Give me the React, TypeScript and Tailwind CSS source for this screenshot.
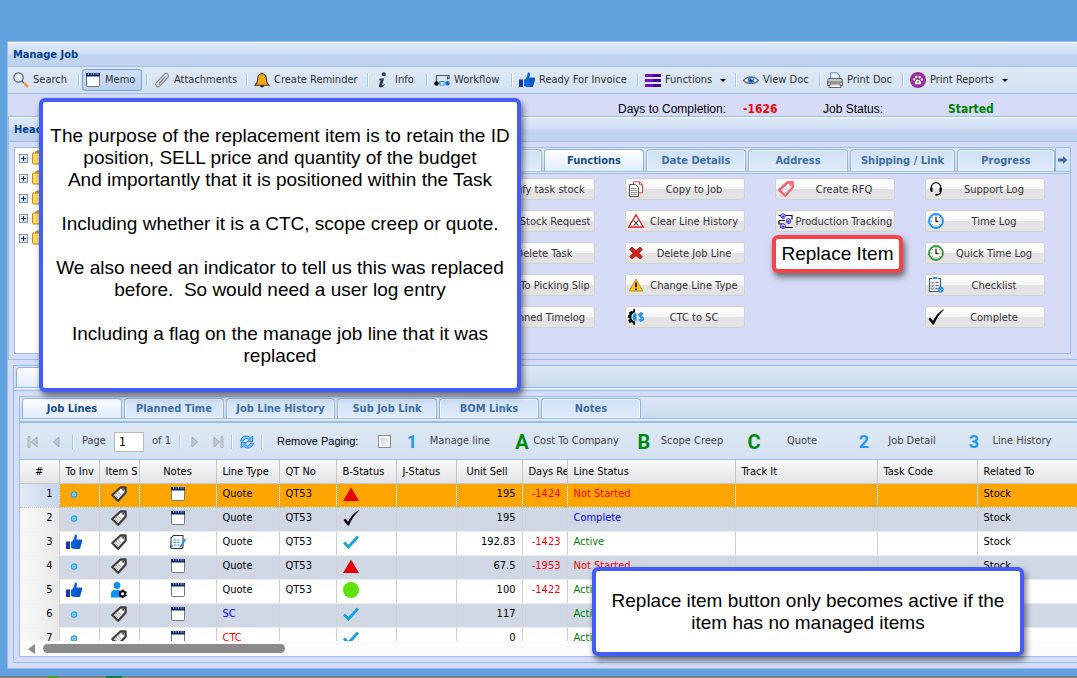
import type { ReactNode } from "react";
import clsx from "clsx";

const UI_FONT = "font-['DejaVu_Sans_Condensed','Noto_Sans',sans-serif]";
const NOTE_FONT = "font-['Liberation_Sans',Arial,sans-serif]";

function Svg({ children, className = "size-4" }: { children: ReactNode; className?: string }) {
  return (
    <svg viewBox="0 0 16 16" className={clsx("shrink-0", className)} fill="none" aria-hidden="true">
      {children}
    </svg>
  );
}

/* ---------- toolbar icons ---------- */

const SearchIcon = () => (
  <Svg>
    <circle cx="5.5" cy="5.5" r="4.6" fill="#e3ecf8" stroke="#59617c" strokeWidth="1.3" />
    <path d="M9 9l2 2" stroke="#59617c" strokeWidth="1.5" />
    <path d="M11 11l4 4" stroke="#e2a04c" strokeWidth="2.6" />
  </Svg>
);

const MemoIcon = () => (
  <Svg>
    <rect x="1.5" y="1.5" width="13" height="13" rx="1" fill="#fff" stroke="#77777c" />
    <path d="M1 1h14v3.500H1z" fill="#0e2a66" />
    <path d="M3.500 0v3M6 0v3M8.500 0v3M11 0v3M13 0v3" stroke="#9fb4dc" strokeWidth=".8" />
  </Svg>
);

const ClipIcon = () => (
  <Svg>
    <path
      d="M11.500 4.500l-6 6.500c-1 1.200.7 2.500 1.700 1.500l6.500-7c2-2.400-1-5.400-3.300-3.200l-7.800 8c-2.400 2.700.8 6 3.400 3.600l6-6.300"
      stroke="#8b8d90"
      strokeWidth="1.200"
    />
  </Svg>
);

const BellIcon = () => (
  <Svg>
    <path d="M8 .8v2" stroke="#222" strokeWidth="2.200" />
    <path d="M8 1.800c-3 0-4.300 2.400-4.300 5.200 0 3-.8 4.700-2.500 6.200h13.600c-1.700-1.500-2.500-3.200-2.500-6.200 0-2.800-1.300-5.200-4.300-5.200z" fill="#fca714" stroke="#493a31" strokeWidth="1.100" />
    <path d="M6 13.500h4c0 2.600-4 2.600-4 0z" fill="#222" />
  </Svg>
);

const InfoIcon = () => (
  <Svg>
    <circle cx="8.800" cy="2.300" r="2" fill="#2f3e4d" />
    <path d="M4.500 6.600h4.600l-2 6.800c.8 0 1.500-.5 2.200-1.300l.4.400c-1.400 2-2.700 3-4.300 3-1.200 0-1.700-.9-1.300-2.200l1.500-5c-.5 0-.9.200-1.500.3z" fill="#2f3e4d" />
  </Svg>
);

const WorkflowIcon = () => (
  <Svg>
    <path d="M2.500 11V3.500h12.500v3h-1.500M4 11h3" stroke="#52565e" strokeWidth="1.200" />
    <path d="M13.500 4.500v3" stroke="#52565e" />
    <circle cx="2.500" cy="11.500" r="2.200" fill="#000" />
    <rect x="6" y="9.500" width="4" height="3.600" fill="#fff" stroke="#1e90ff" />
    <circle cx="13.500" cy="11.300" r="2.200" fill="#1668e8" />
  </Svg>
);

const ThumbIcon = () => (
  <Svg>
    <path d="M0 7.500h4v7.500H0z" fill="#153c9d" />
    <path d="M5 8c2-1 3.300-3 3.600-6.400C8.800 0 11 .2 11 2.300c0 1.500-.4 2.500-.7 3.500H15c1 0 1.200 1.200.8 2.200l-1.500 5.500c-.3 1-.8 1.500-1.800 1.500H7.500L5 14z" fill="#0b66dd" />
    <path d="M10.300 5.800H15c1 0 1.200 1.200.8 2.200L14 14c-.3.800-.8 1-1.500 1h-2z" fill="#0a56c4" />
  </Svg>
);

const BarsIcon = () => (
  <Svg>
    <path d="M0 3.500h16M0 8.500h16M0 13.500h16" stroke="#7310c4" strokeWidth="3" />
    <path d="M8 3.500h8M8 8.500h8M8 13.500h8" stroke="#4b0290" strokeWidth="3" />
  </Svg>
);

const EyeIcon = () => (
  <Svg>
    <path d="M.5 8.500c4-4.800 11-4.800 15 0-4 4-11 4-15 0z" fill="#f5f8fc" stroke="#646b75" strokeWidth="1.200" />
    <circle cx="8" cy="8" r="3.200" fill="#2483e2" />
    <circle cx="8" cy="8.300" r="1.400" fill="#062f63" />
    <circle cx="9" cy="6.800" r=".9" fill="#fff" />
  </Svg>
);

const PrinterIcon = () => (
  <Svg>
    <path d="M3.500 8V.8h6.500l2.500 2.400V8z" fill="#e8f3fd" stroke="#4c8fd6" />
    <path d="M1.500 6.500h13l1 2v5H.5v-5z" fill="#c9c9c9" stroke="#666" />
    <path d="M1 10h14" stroke="#5a5a5a" />
    <path d="M3 12h10l1 3.500H2z" fill="#eee" stroke="#666" />
  </Svg>
);

const PawIcon = () => (
  <Svg>
    <circle cx="8" cy="8" r="8" fill="#97309b" />
    <ellipse cx="6.300" cy="5" rx="1.100" ry="1.600" fill="#fff" />
    <ellipse cx="9.700" cy="5" rx="1.100" ry="1.600" fill="#fff" />
    <ellipse cx="4.200" cy="7.500" rx="1" ry="1.300" fill="#fff" />
    <ellipse cx="11.800" cy="7.500" rx="1" ry="1.300" fill="#fff" />
    <path d="M8 7.700c1.800 0 3.200 2 3.200 3.500 0 1.300-1.600 1.400-3.200.7-1.600.7-3.200.6-3.200-.7 0-1.500 1.400-3.500 3.200-3.500z" fill="#fff" />
    <path d="M8 9v2M7 10h2" stroke="#97309b" strokeWidth=".8" />
  </Svg>
);

/* ---------- function button icons ---------- */

const CopyIcon = () => (
  <Svg>
    <path d="M5.500.8h6l3 3v8h-9z" fill="#fff" stroke="#e33c48" />
    <path d="M11.500.8v3h3" stroke="#e33c48" />
    <path d="M1.500 3.500h6l3 3v9h-9z" fill="#fff" stroke="#555" />
    <path d="M3 7.500h5M3 9.500h6M3 11.500h6M3 13.500h6" stroke="#777" strokeWidth=".8" />
  </Svg>
);

const ClearIcon = () => (
  <Svg>
    <path d="M8 1.800L15.200 14H.8z" fill="#fff" stroke="#ee1c24" strokeWidth="1.300" />
    <path d="M5.800 7.500l4.500 5M10.300 7.500l-4.500 5" stroke="#222" strokeWidth="1.100" />
  </Svg>
);

const CrossIcon = () => (
  <Svg>
    <path d="M4 2l4 3.500L12 2l2.300 2.300L11 8.200l3.300 3.500L12 14l-4-3.300L4 14l-2.300-2.300L5 8.200 1.700 4.300z" fill="#d32222" stroke="#9e1414" strokeWidth=".8" />
  </Svg>
);

const WarnIcon = () => (
  <Svg>
    <path d="M8 2l6.800 12H1.200z" fill="#fdc91b" stroke="#c18d10" strokeLinejoin="round" />
    <path d="M8 5.500v4.800M8 11.500v1.700" stroke="#111" strokeWidth="1.800" />
  </Svg>
);

const CogMoneyIcon = () => (
  <Svg>
    <path d="M7 0v3.200a5 5 0 0 0 0 9.600V16H5.500L5 14l-1.500-.8-2 .8-1.200-2.500L1.500 10v-1L0 8.500v-2L1.500 5.500 1 3.500 3.500 2l1.500.6L5.500 0z" fill="#050505" />
    <path d="M8.500 4a4 4 0 0 0 0 8z" fill="#1e8ee9" />
    <path d="M15.300 5.200c-1.500-1.200-4.600-.9-4.600.9 0 2.300 4.800 1 4.800 3.500 0 2-3.500 2.300-5 .8M13 3v10" stroke="#1e8ee9" strokeWidth="1.400" />
  </Svg>
);

const RfqIcon = () => (
  <Svg>
    <path d="M9.500 1.500l5-.2.200 5.200-7.600 8.200L1.200 9z" fill="#fff" stroke="#f4606c" strokeWidth="2.400" strokeLinejoin="round" />
    <path d="M4.500 8.500l3.500 3.500M6 7l3.500 3.500M7.500 5.500L11 9" stroke="#a9a9ad" strokeDasharray="1 .8" />
    <circle cx="12.300" cy="3.700" r="1" fill="#f4606c" />
  </Svg>
);

const TrackingIcon = () => (
  <Svg>
    <path d="M.5 2.500H14v4M2 14.500h12.500M1 7.500v3.500h3M1 7.500h6" stroke="#111" strokeWidth="1.200" />
    <g fill="#e5e2fc" stroke="#3a22d8">
      <circle cx="5" cy="3" r="2.300" />
      <circle cx="10.500" cy="8" r="2.300" />
      <circle cx="5" cy="13" r="2.300" />
    </g>
    <path d="M5 2v4M3.800 3.500h2.400M10.500 7v4M9.300 8.500h2.400M5 12v4M3.800 13.500h2.400" stroke="#3a22d8" strokeWidth=".8" />
  </Svg>
);

const HeadsetIcon = () => (
  <Svg>
    <path d="M3.200 9V6.500a4.800 4.800 0 0 1 9.600 0v4c0 2-1 3-4 3.300" stroke="#111" strokeWidth="1.300" />
    <path d="M2 6.800h2.600V11H3.300C2.200 10.400 2 9 2 6.800zM14 6.800h-2.600V11h1.300c1.100-.6 1.300-2 1.300-4.200z" fill="#111" />
    <path d="M7.500 13.800h2" stroke="#111" strokeWidth="1.800" />
  </Svg>
);

function ClockIcon({ color }: { color: string }) {
  return (
    <Svg>
      <circle cx="8" cy="8" r="7" fill="#fff" stroke={color} strokeWidth="1.900" />
      <path d="M8 4v4.500h2.500" stroke="#222" strokeWidth="1.300" />
      <path d="M8 2.500v1M8 12.500v1M2.500 8h1M12.500 8h1M4.300 4.300l.5.500M11.200 4.800l.5-.5M4.300 11.700l.5-.5M11.200 11.200l.5.500" stroke="#333" />
    </Svg>
  );
}

const ChecklistIcon = () => (
  <Svg>
    <path d="M4 1.500H1.500v13h9M10 1.500h2.500V10" stroke="#55606e" strokeWidth="1.200" />
    <path d="M4.500 1h5" stroke="#1e90ff" strokeWidth="2" />
    <path d="M3.200 5.500l1 1 1.500-1.800M3.200 8.500l1 1 1.500-1.800M3.200 11.500l1 1 1.500-1.800M7.500 5.500h3M7.500 8.500h3M7.500 11.500h2" stroke="#55606e" />
    <circle cx="12.800" cy="12.600" r="2.900" fill="#1e90ff" />
    <path d="M11.500 12.600l1 1 1.700-1.700" stroke="#fff" strokeWidth=".9" />
  </Svg>
);

const TickIcon = () => (
  <Svg>
    <path d="M.5 10l2-1.400L5 12C7.500 7 10.500 3 15.800.3l.2.500C11.500 4.800 8.500 9.500 6 15.500H4.500z" fill="#000" />
  </Svg>
);

/* ---------- grid icons ---------- */

const DotIcon = () => (
  <Svg>
    <circle cx="8" cy="8.500" r="2.700" fill="#9ad7f5" stroke="#2a9fe0" strokeWidth="1.200" />
    <circle cx="8" cy="8.500" r="1" fill="#5cb0dd" />
  </Svg>
);

const TagIcon = () => (
  <Svg>
    <path d="M9.500 1.500l5-.2.200 5.200-7.600 8.200L1.300 9z" fill="#fff" stroke="#3d3d3f" strokeWidth="2.300" strokeLinejoin="round" />
    <path d="M3.800 8.700l3.500 3.500M5.300 7.200l3.700 3.700M6.900 5.700l3.600 3.600" stroke="#8e8e90" strokeWidth="1.100" strokeDasharray="1 .6" />
    <circle cx="12.200" cy="3.800" r="1" fill="#3d3d3f" />
  </Svg>
);

const NoteEditIcon = () => (
  <Svg>
    <path d="M3.500 1.500h9.500v11c0 1.500-.8 2-2 2H2c-1 0-1.500-.8-1.500-2.500H3M3.500 1.500L1 4v8" fill="#fff" stroke="#333" strokeWidth="1.100" />
    <path d="M3.500 6h6M3.500 8.500h6M3.500 11h6" stroke="#1e90ff" strokeDasharray="3 1" />
    <path d="M15.500 5L11 12" stroke="#1e90ff" strokeWidth="1.700" />
    <path d="M11 11.500l-.5 1.800" stroke="#222" />
  </Svg>
);

const UserCogIcon = () => (
  <Svg>
    <circle cx="6" cy="3.500" r="3.400" fill="#0d93f7" />
    <path d="M0 15.500v-4C0 9.300 1.500 8 3.500 8h4c2 0 2.500 1 2.500 2v5.500z" fill="#0d93f7" />
    <circle cx="11.700" cy="11.800" r="2.600" fill="#fff" stroke="#111" strokeWidth="2" />
    <path d="M11.700 7.600v1.700M11.700 14.300V16M8 9.800l1.500.8M14 13l1.500.8M8 13.800l1.500-.8M14 10.600l1.500-.8" stroke="#111" strokeWidth="1.700" />
  </Svg>
);

const TriangleIcon = () => (
  <Svg>
    <path d="M8 1.500l8 13.500H0z" fill="#e60000" />
  </Svg>
);

const BlueTickIcon = () => (
  <Svg>
    <path d="M1 8.500l4.500 4.500L15 2.500" stroke="#12a1e2" strokeWidth="2.900" />
  </Svg>
);

const CircleIcon = () => (
  <Svg>
    <circle cx="8" cy="8" r="8" fill="#5ee20c" />
  </Svg>
);

const RefreshIcon = () => (
  <Svg>
    <path d="M1.500 7C2 3.500 5 1.500 8.500 2.200c1.200.2 2.300.9 3 1.800L13.800 2v5.500H8.300l2-2C8 3.800 4.800 4.500 4.300 7z" fill="#7cc2f5" stroke="#1474d4" strokeWidth=".8" />
    <path d="M14.500 9c-.5 3.500-3.500 5.500-7 4.800-1.200-.2-2.300-.9-3-1.800L2.200 14V8.500h5.500l-2 2c2.300 1.700 5.500 1 6-1.500z" fill="#7cc2f5" stroke="#1474d4" strokeWidth=".8" />
  </Svg>
);

const FolderIcon = () => (
  <Svg>
    <path d="M3 2.500L5 1h9v11l-2 2.500" fill="#e8a82c" stroke="#b57a14" />
    <rect x=".5" y="3" width="12" height="11" rx="1" fill="#fbdc70" stroke="#c18a1c" />
  </Svg>
);

function PagerArrow({ flip, bar }: { flip?: boolean; bar?: boolean }) {
  return (
    <Svg className={clsx("size-4", flip && "rotate-180")}>
      <path d="M11 3L5.500 8l5.500 5z" fill="#c6cad0" stroke="#a3a8b0" />
      {bar && <path d="M2 2.500h2v11H2z" fill="#d5d8dc" stroke="#a3a8b0" strokeWidth=".8" />}
    </Svg>
  );
}

/* ---------- shared pieces ---------- */

const Separator = () => <span className="h-3.5 w-0.5 shrink-0 border-l border-[#98c8ff] bg-white" />;

function PanelTitle({ children }: { children: ReactNode }) {
  return (
    <h2 className="flex h-6 items-center border-t border-white bg-linear-to-b from-[#dce8f7] from-0% via-[#cfdff3] via-48% to-[#c0d4ef] to-52% px-[5px] pt-0.5 text-[11px] font-bold text-[#04408c]">
      {children}
    </h2>
  );
}

function Tab({ label, width, active }: { label: string; width: string; active?: boolean }) {
  return (
    <button
      type="button"
      role="tab"
      aria-selected={!!active}
      className={clsx(
        "h-full shrink-0 rounded-t border border-b-0 border-[#8db2e3] pt-0.5 text-[11px] font-bold whitespace-nowrap",
        width,
        active
          ? "bg-linear-to-b from-white to-[#deecfd] text-[#15498b]"
          : "bg-linear-to-b from-[#cfe0f5] to-[#deebfc] text-[#416da3] inset-ring inset-ring-white/70",
      )}
    >
      {label}
    </button>
  );
}

/* ---------- data ---------- */

type ToolItem = { label: string; icon: ReactNode; width: string; pressed?: boolean; menu?: boolean };

const tools: ToolItem[] = [
  { label: "Search", icon: <SearchIcon />, width: "w-[65px]" },
  { label: "Memo", icon: <MemoIcon />, width: "w-[60px]", pressed: true },
  { label: "Attachments", icon: <ClipIcon />, width: "w-[90px]" },
  { label: "Create Reminder", icon: <BellIcon />, width: "w-[111px]" },
  { label: "Info", icon: <InfoIcon />, width: "w-[49px]" },
  { label: "Workflow", icon: <WorkflowIcon />, width: "w-[75px]" },
  { label: "Ready For Invoice", icon: <ThumbIcon />, width: "w-[116px]" },
  { label: "Functions", icon: <BarsIcon />, width: "w-[88px]", menu: true },
  { label: "View Doc", icon: <EyeIcon />, width: "w-[74px]" },
  { label: "Print Doc", icon: <PrinterIcon />, width: "w-[73px]" },
  { label: "Print Reports", icon: <PawIcon />, width: "w-[110px]", menu: true },
];

const functionColumns: { label: string; icon: ReactNode }[][] = [
  [
    { label: "Verify task stock", icon: <TickIcon /> },
    { label: "Add Stock Request", icon: <CopyIcon /> },
    { label: "Delete Task", icon: <CrossIcon /> },
    { label: "Add To Picking Slip", icon: <ChecklistIcon /> },
    { label: "Planned Timelog", icon: <ClockIcon color="#1e90ff" /> },
  ],
  [
    { label: "Copy to Job", icon: <CopyIcon /> },
    { label: "Clear Line History", icon: <ClearIcon /> },
    { label: "Delete Job Line", icon: <CrossIcon /> },
    { label: "Change Line Type", icon: <WarnIcon /> },
    { label: "CTC to SC", icon: <CogMoneyIcon /> },
  ],
  [
    { label: "Create RFQ", icon: <RfqIcon /> },
    { label: "Production Tracking", icon: <TrackingIcon /> },
  ],
  [
    { label: "Support Log", icon: <HeadsetIcon /> },
    { label: "Time Log", icon: <ClockIcon color="#1e90ff" /> },
    { label: "Quick Time Log", icon: <ClockIcon color="#3c9a40" /> },
    { label: "Checklist", icon: <ChecklistIcon /> },
    { label: "Complete", icon: <TickIcon /> },
  ],
];

const lineActions = [
  { mark: "1", label: "Manage line", width: "w-20" },
  { mark: "A", label: "Cost To Company", width: "w-[92px]" },
  { mark: "B", label: "Scope Creep", width: "w-20" },
  { mark: "C", label: "Quote", width: "w-20" },
  { mark: "2", label: "Job Detail", width: "w-20" },
  { mark: "3", label: "Line History", width: "w-20" },
];

const columns = [
  { title: "#", width: "w-[39px]", align: "text-center" },
  { title: "To Inv", width: "w-10", align: "pl-1.5 text-left" },
  { title: "Item S", width: "w-10", align: "pl-1.5 text-left" },
  { title: "Notes", width: "w-[77px]", align: "text-center" },
  { title: "Line Type", width: "w-[63px]", align: "pl-1.5 text-left" },
  { title: "QT No", width: "w-[57px]", align: "pl-1.5 text-left" },
  { title: "B-Status", width: "w-[60px]", align: "pl-1.5 text-left" },
  { title: "J-Status", width: "w-[60px]", align: "pl-1.5 text-left" },
  { title: "Unit Sell", width: "w-[66px]", align: "pr-1 text-center" },
  { title: "Days Re", width: "w-[45px]", align: "pl-1.5 text-left" },
  { title: "Line Status", width: "w-[168px]", align: "pl-1.5 text-left" },
  { title: "Track It", width: "w-[142px]", align: "pl-1.5 text-left" },
  { title: "Task Code", width: "w-[100px]", align: "pl-1.5 text-left" },
  { title: "Related To", width: "w-[140px]", align: "pl-1.5 text-left" },
];

type Line = {
  invoice?: boolean;
  user?: boolean;
  edited?: boolean;
  type: string;
  quote?: string;
  badge: "late" | "done" | "active" | "ok";
  sell: string;
  days?: string;
  status: string;
  related?: string;
};

const lines: Line[] = [
  { type: "Quote", quote: "QT53", badge: "late", sell: "195", days: "-1424", status: "Not Started", related: "Stock" },
  { type: "Quote", quote: "QT53", badge: "done", sell: "195", status: "Complete", related: "Stock" },
  { invoice: true, edited: true, type: "Quote", quote: "QT53", badge: "active", sell: "192.83", days: "-1423", status: "Active", related: "Stock" },
  { type: "Quote", quote: "QT53", badge: "late", sell: "67.5", days: "-1953", status: "Not Started", related: "Stock" },
  { invoice: true, user: true, type: "Quote", quote: "QT53", badge: "ok", sell: "100", days: "-1422", status: "Active" },
  { type: "SC", badge: "active", sell: "117", status: "Active" },
  { type: "CTC", badge: "active", sell: "0", status: "Active" },
];

const badges = {
  late: <TriangleIcon />,
  done: <TickIcon />,
  active: <BlueTickIcon />,
  ok: <CircleIcon />,
};

const typeColors: Record<string, string> = { SC: "text-[#0000ff]", CTC: "text-[#ff0000]" };
const statusColors: Record<string, string> = {
  "Not Started": "text-[#ff0000]",
  Complete: "text-[#0000ff]",
  Active: "text-[#008000]",
};

/* ---------- sections ---------- */

function Toolbar() {
  return (
    <div role="toolbar" className="flex h-7 items-center border-y border-[#99bce8] bg-linear-to-b from-[#dfe9f5] to-[#d3e1f1] pl-[5px]">
      {tools.map((tool, i) => (
        <div key={tool.label} className="flex shrink-0 items-center">
          {i > 0 && <Separator />}
          <button
            type="button"
            className={clsx(
              "flex h-[22px] items-center gap-1 text-[11px] whitespace-nowrap text-[#333]",
              tool.width,
              i > 1 && "mr-0.5 ml-1.5",
              tool.pressed && "mr-1 ml-0.5 rounded-[3px] border border-[#7b9fd3] bg-linear-to-b from-[#cfe1f8] to-[#b8d0ef] px-0.5",
            )}
          >
            {tool.icon}
            <span className="pt-px">{tool.label}</span>
            {tool.menu && <span className="ml-1 border-x-[3px] border-t-[3px] border-x-transparent border-t-black" />}
          </button>
        </div>
      ))}
    </div>
  );
}

function Tree() {
  return (
    <ul className="w-[200px] shrink-0 border border-[#99bce8] bg-white pl-1">
      {["Job", "Client", "Site", "Budget", "Task"].map((node) => (
        <li key={node} className="flex h-5 items-center gap-1">
          <button
            type="button"
            aria-label={`Expand ${node}`}
            className="flex size-[9px] items-center justify-center border border-[#7f93b5] bg-linear-to-br from-white to-[#c9d6e8]"
          >
            <svg viewBox="0 0 7 7" className="size-[7px]">
              <path d="M1 3.500h5M3.500 1v5" stroke="#12294f" />
            </svg>
          </button>
          <FolderIcon />
        </li>
      ))}
    </ul>
  );
}

function FunctionsPanel() {
  return (
    <div className="min-w-0 flex-1 overflow-hidden border border-[#99bce8]">
      <div role="tablist" className="flex h-[23px] justify-end gap-0.5 bg-linear-to-b from-[#dde8f5] to-[#cbdbef] pt-px">
        <Tab label="" width="w-[100px]" />
        <Tab label="Functions" width="w-[100px]" active />
        <Tab label="Date Details" width="w-[100px]" />
        <Tab label="Address" width="w-[100px]" />
        <Tab label="Shipping / Link" width="w-[105px]" />
        <div className="flex">
          <Tab label="Progress" width="w-[98px]" />
          <button type="button" aria-label="Scroll tabs" className="flex w-[15px] items-center justify-center border-l border-[#8db2e3] bg-[#d3e3f7]">
            <svg viewBox="0 0 10 10" className="size-2.5">
              <path d="M0 3.500h5V1l4.500 4L5 9V6.500H0z" fill="#416da3" />
            </svg>
          </button>
        </div>
      </div>
      <div className="h-[3px] border-y border-[#99bce8] bg-[#deecfd]" />
      <div className="flex justify-end gap-[30px] pt-1 pr-[25px]">
        {functionColumns.map((column, i) => (
          <div key={i} className="flex w-[120px] shrink-0 flex-col gap-2.5">
            {column.map((item) => (
              <button
                key={item.label}
                type="button"
                className="flex h-[22px] w-full items-center overflow-hidden rounded-[3px] border border-[#d1d1d1] bg-linear-to-b from-white from-0% via-[#f6f6f6] via-48% to-[#e3e3e3] to-52% pl-0.5 text-[11px] text-[#333]"
              >
                {item.icon}
                <span className="flex-1 pt-0.5 text-center whitespace-nowrap">{item.label}</span>
              </button>
            ))}
          </div>
        ))}
      </div>
    </div>
  );
}

function PagingBar() {
  return (
    <div className="flex h-[37px] items-center overflow-hidden border-b border-[#99bce8] bg-linear-to-b from-[#dfe9f5] to-[#d3e1f1] pt-px pl-1.5 text-[11px] text-[#444]">
      <button type="button" aria-label="First page" className="mr-1.5"><PagerArrow bar /></button>
      <button type="button" aria-label="Previous page" className="mr-2"><PagerArrow /></button>
      <Separator />
      <label htmlFor="page" className="ml-2 w-8">Page</label>
      <input id="page" defaultValue="1" className="h-5 w-[30px] border border-[#b5b8c8] bg-white px-1 text-[12px] text-black" />
      <span className="ml-2 w-[27px] whitespace-nowrap">of 1</span>
      <Separator />
      <button type="button" aria-label="Next page" className="ml-1.5"><PagerArrow flip /></button>
      <button type="button" aria-label="Last page" className="mx-1.5"><PagerArrow flip bar /></button>
      <Separator />
      <button type="button" aria-label="Refresh" className="mx-1.5"><RefreshIcon /></button>
      <Separator />
      <label htmlFor="remove-paging" className="ml-3.5 w-[101px] font-['Liberation_Sans',sans-serif] text-black">Remove Paging:</label>
      <input
        id="remove-paging"
        type="checkbox"
        className="mr-[13px] size-[13px] shrink-0 appearance-none border border-[#8e8f8f] bg-linear-to-br from-[#c5cad2] to-white inset-ring-2 inset-ring-[#f4f4f4] checked:bg-[#4b6fa8]"
      />
      <div className="flex gap-[14px]">
        {lineActions.map((action) => (
          <button key={action.label} type="button" className="flex shrink-0 items-center">
            <span
              className={clsx(
                "w-4 text-center font-[Roboto,sans-serif] leading-5 font-bold",
                /\d/.test(action.mark) ? "text-[18px] text-[#2196f3]" : "text-[20px] text-[#008a0c]",
              )}
            >
              {action.mark}
            </span>
            <span className={clsx("text-center whitespace-nowrap", action.width)}>{action.label}</span>
          </button>
        ))}
      </div>
    </div>
  );
}

function LinesTable() {
  return (
    <div className="h-[181px] overflow-hidden bg-white">
      <table className="w-[1097px] table-fixed border-collapse text-[11px] text-black">
        <thead>
          <tr className="h-[23px] bg-linear-to-b from-[#f9f9f9] to-[#e3e4e6]">
            {columns.map((col) => (
              <th
                key={col.title}
                className={clsx("overflow-hidden border-r border-b border-[#c5c5c5] pt-0.5 font-normal whitespace-nowrap", col.width, col.align)}
              >
                {col.title}
              </th>
            ))}
          </tr>
        </thead>
        <tbody>
          {lines.map((line, i) => {
            const selected = i === 0;
            const cell = clsx(
              "overflow-hidden border-r border-b px-1.5 pb-0.5 whitespace-nowrap",
              selected ? "border-dotted border-[#b9c0cc]" : "border-r-[#d0d0d0] border-b-[#ededed]",
            );
            return (
              <tr key={i} className={clsx("h-6", selected ? "bg-[#ffa500]" : i % 2 ? "bg-[#d0d8e6]" : "bg-white")}>
                <td
                  className={clsx(
                    cell,
                    "bg-linear-to-r text-right",
                    selected ? "from-[#e3eaf4] to-[#c3d5ee]" : "from-[#f9f9f9] to-[#e8e8e8]",
                  )}
                >
                  {i + 1}
                </td>
                <td className={cell}>{line.invoice ? <ThumbIcon /> : <DotIcon />}</td>
                <td className={cell}><div className="flex justify-center">{line.user ? <UserCogIcon /> : <TagIcon />}</div></td>
                <td className={cell}><div className="flex justify-center">{line.edited ? <NoteEditIcon /> : <MemoIcon />}</div></td>
                <td className={clsx(cell, typeColors[line.type])}>{line.type}</td>
                <td className={cell}>{line.quote}</td>
                <td className={cell}>{badges[line.badge]}</td>
                <td className={cell} />
                <td className={clsx(cell, "text-right")}>{line.sell}</td>
                <td className={clsx(cell, "text-right text-[#ff0000]")}>{line.days}</td>
                <td className={clsx(cell, statusColors[line.status])}>{line.status}</td>
                <td className={cell} />
                <td className={cell} />
                <td className={cell}>{line.related}</td>
              </tr>
            );
          })}
        </tbody>
      </table>
    </div>
  );
}

function Note({ className, children }: { className: string; children: ReactNode }) {
  return (
    <aside
      className={clsx(
        "absolute rounded-md border-4 bg-white text-center whitespace-pre text-black shadow-[2px_4px_6px_rgba(0,0,0,0.55)]",
        NOTE_FONT,
        className,
      )}
    >
      {children}
    </aside>
  );
}

export default function App() {
  return (
    <div className={clsx("relative min-h-screen overflow-hidden bg-[#5fa2dd] pt-[41px]", UI_FONT)}>
      <main className="ml-[7px] border-y border-l border-[#99bce8] bg-[#d6dcf7]">
        <PanelTitle>Manage Job</PanelTitle>
        <Toolbar />

        <div className={clsx("flex h-[22px] items-center pt-2 pl-[610px] text-[12px] whitespace-nowrap text-black", NOTE_FONT)}>
          <span className="w-[125px] shrink-0">Days to Completion:</span>
          <strong className="w-20 shrink-0 font-['DejaVu_Sans_Condensed',sans-serif] text-[#ff0000]">-1626</strong>
          <span className="w-[125px] shrink-0">Job Status:</span>
          <strong className="font-['DejaVu_Sans_Condensed',sans-serif] text-[#008000]">Started</strong>
        </div>

        <section className="border-y border-l border-[#99bce8]">
          <PanelTitle>Header</PanelTitle>
          <div className="flex gap-1.5 border-t border-[#99bce8] pt-[5px] pr-1.5 pb-[5px] pl-[5px]">
            <Tree />
            <div className="flex h-[207px] min-w-0 flex-1">
              <FunctionsPanel />
            </div>
          </div>
        </section>

        <section className="mt-[5px] mb-[5px] ml-[5px] border-y border-l border-[#99bce8]">
          <div role="tablist" className="flex h-[21px] bg-linear-to-b from-[#dde8f5] to-[#cbdbef] pt-px pl-0.5">
            <Tab label="" width="w-[100px]" active />
          </div>
          <div className="h-1 border-y border-[#99bce8] bg-[#deecfd]" />
          <div className="mt-[5px] mb-[5px] ml-[5px] border-y border-l border-[#99bce8]">
            <div role="tablist" className="flex h-[21px] gap-0.5 bg-linear-to-b from-[#dde8f5] to-[#cbdbef] pt-px pl-0.5">
              <Tab label="Job Lines" width="w-[100px]" active />
              <Tab label="Planned Time" width="w-[100px]" />
              <Tab label="Job Line History" width="w-[109px]" />
              <Tab label="Sub Job Link" width="w-[100px]" />
              <Tab label="BOM Links" width="w-[100px]" />
              <Tab label="Notes" width="w-[100px]" />
            </div>
            <div className="h-[5px] border-t border-b-2 border-[#99bce8] bg-[#deecfd]" />
            <PagingBar />
            <LinesTable />
            <div className="flex h-[15px] items-center gap-2 bg-[#fcfcfc] pl-2">
              <span className="border-y-[5px] border-r-[7px] border-y-transparent border-r-[#8b8b8b]" />
              <span className="h-[9px] w-[242px] rounded-full bg-[#8b8b8b]" />
            </div>
          </div>
        </section>
      </main>
      <div className="mt-[7px] flex h-0.5 bg-[#808080] pl-12">
        <span className="mr-12 w-2.5 bg-[#4c9a1e]" />
        <span className="w-4 bg-[#1b7a45]" />
      </div>

      <Note className="top-[98px] left-[39px] h-[294px] w-[482px] border-[#445cfc] pt-[23px] text-[19px] leading-[22px]">
        {`The purpose of the replacement item is to retain the ID
position, SELL price and quantity of the budget
And importantly that it is positioned within the Task

Including whether it is a CTC, scope creep or quote.

We also need an indicator to tell us this was replaced
before.  So would need a user log entry

Including a flag on the manage job line that it was
replaced`}
      </Note>
      <Note className="top-[235px] left-[772px] w-[131px] border-[#f94146] py-1 text-[19px] leading-[22px]">Replace Item</Note>
      <Note className="top-[567px] left-[592px] w-[432px] border-[#445cfc] pt-[19px] pb-[18px] text-[19px] leading-[22px]">
        {`Replace item button only becomes active if the
item has no managed items`}
      </Note>
    </div>
  );
}
